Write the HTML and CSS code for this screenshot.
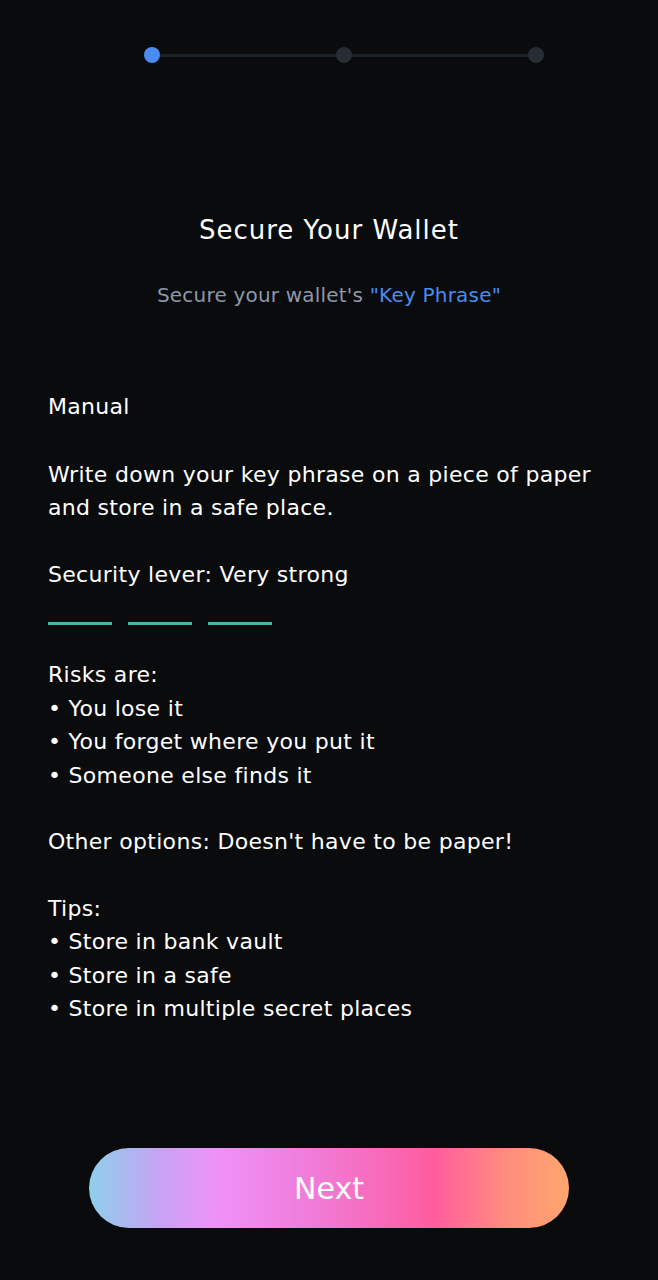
FILE: index.html
```html
<!DOCTYPE html>
<html lang="en">
<head>
<meta charset="utf-8">
<title>Secure Your Wallet</title>
<link rel="stylesheet" href="styles.css">
</head>
<body>
<div class="screen">
  <div class="stepper">
    <span class="dot dot-active"></span>
    <span class="track"></span>
    <span class="dot"></span>
    <span class="track"></span>
    <span class="dot"></span>
  </div>

  <h1 class="title">Secure Your Wallet</h1>
  <p class="subtitle">Secure your wallet's <span class="accent">"Key Phrase"</span></p>

  <div class="content">
    <p class="heading">Manual</p>
    <p class="para">Write down your key phrase on a piece of paper and store in a safe place.</p>
    <p class="para">Security lever: Very strong</p>
    <div class="strength">
      <span class="bar"></span>
      <span class="bar"></span>
      <span class="bar"></span>
    </div>
    <div class="para">
      <div>Risks are:</div>
      <div>• You lose it</div>
      <div>• You forget where you put it</div>
      <div>• Someone else finds it</div>
    </div>
    <p class="para">Other options: Doesn't have to be paper!</p>
    <div class="para">
      <div>Tips:</div>
      <div>• Store in bank vault</div>
      <div>• Store in a safe</div>
      <div>• Store in multiple secret places</div>
    </div>
  </div>

  <div class="footer">
    <button class="next">Next</button>
  </div>
</div>
</body>
</html>
```

FILE: styles.css
```css
html, body {
  margin: 0;
  padding: 0;
  background: #0a0b0d;
}

body {
  font-family: "DejaVu Sans", "Noto Sans", sans-serif;
  color: #ffffff;
}

.screen {
  display: flex;
  flex-direction: column;
  min-height: 1280px;
  box-sizing: border-box;
}

.stepper {
  display: flex;
  align-items: center;
  width: 400px;
  margin: 47px 0 0 144px;
}

.dot {
  width: 16px;
  height: 16px;
  border-radius: 50%;
  background: #272d35;
  flex: none;
}

.dot-active {
  background: #4a8cf2;
}

.track {
  flex: 1;
  height: 3px;
  background: #1c2229;
}

.title {
  margin: 148px 0 0;
  text-align: center;
  font-size: 26px;
  letter-spacing: 1px;
  font-weight: 400;
  line-height: 38px;
}

.subtitle {
  margin: 32px 0 0;
  text-align: center;
  font-size: 20px;
  letter-spacing: 0.2px;
  line-height: 28px;
  color: #8d98aa;
}

.accent {
  color: #4a8cf2;
}

.content {
  padding: 0 48px;
  margin-top: 81px;
  font-size: 22px;
  letter-spacing: 0.3px;
  line-height: 33.5px;
}

.heading {
  margin: 0 0 34px;
}

.para {
  margin: 0 0 33px;
}

.strength {
  display: flex;
  gap: 16px;
  margin: -2px 0 33px;
}

.bar {
  width: 64px;
  height: 3px;
  background: #4fb3a4;
}

.footer {
  margin-top: auto;
  display: flex;
  justify-content: center;
  padding-bottom: 52px;
}

.next {
  width: 480px;
  height: 80px;
  border: none;
  border-radius: 40px;
  background: linear-gradient(90deg, #8fd0ea 0%, #c4a4f4 14%, #ee92f8 26%, #f07ad6 48%, #ff5c9e 72%, #ff8a80 86%, #ffa66e 100%);
  color: #ffffff;
  font-family: inherit;
  font-size: 30px;
  padding: 0;
}
```
